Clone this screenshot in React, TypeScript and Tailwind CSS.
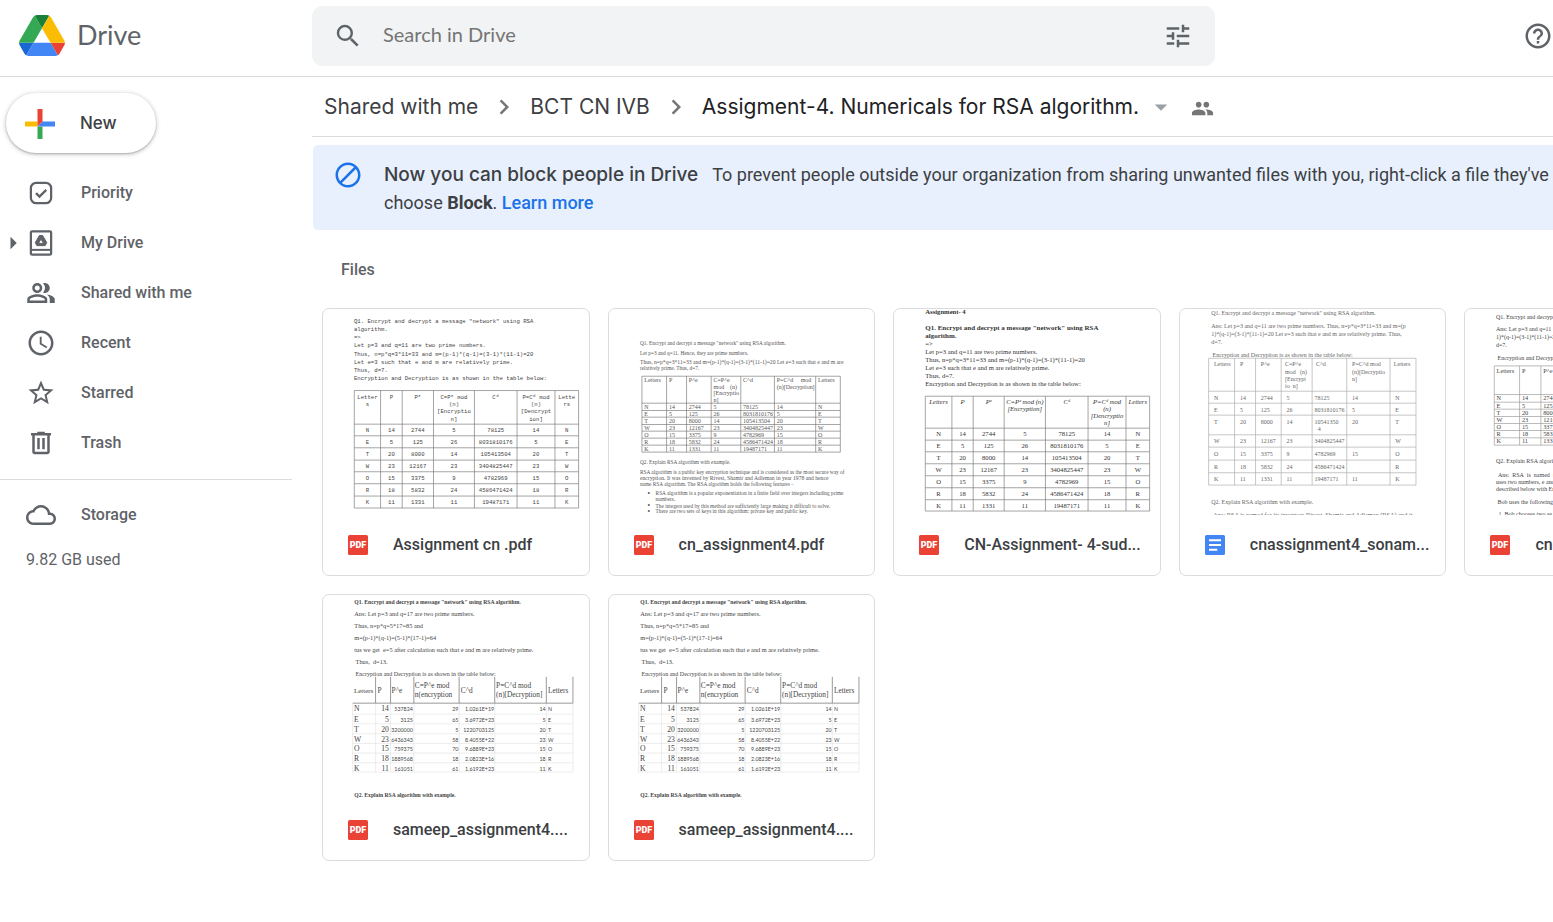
import type { ReactNode } from "react";
import {
  MdAccessTime,
  MdArrowDropDown,
  MdArrowRight,
  MdBlock,
  MdChevronRight,
  MdCloudQueue,
  MdHelpOutline,
  MdOutlinePeopleAlt,
  MdPeople,
  MdSearch,
  MdStarBorder,
  MdTune,
} from "react-icons/md";

/* ---------- Icons ---------- */

function DriveLogo() {
  return (
    <svg viewBox="0 0 87.3 78" className="h-[41px] w-[46px] shrink-0" aria-hidden="true">
      <path fill="#1967d2" d="m6.6 66.85 3.85 6.65c.8 1.4 1.95 2.5 3.3 3.3l13.75-23.8h-27.5c0 1.55.4 3.1 1.2 4.5z" />
      <path fill="#34a853" d="m43.65 25-13.75-23.8c-1.35.8-2.5 1.9-3.3 3.3l-25.4 44a9.06 9.06 0 0 0 -1.2 4.5h27.5z" />
      <path fill="#ea4335" d="m73.55 76.8c1.35-.8 2.5-1.9 3.3-3.3l1.6-2.75 7.65-13.25c.8-1.4 1.2-2.95 1.2-4.5h-27.502z" />
      <path fill="#188038" d="m43.65 25 13.75-23.8c-1.35-.8-2.9-1.2-4.5-1.2h-18.5c-1.6 0-3.15.45-4.5 1.2z" />
      <path fill="#4285f4" d="m59.8 53h-32.3l-13.75 23.8c1.35.8 2.9 1.2 4.5 1.2h50.8c1.6 0 3.15-.45 4.5-1.2z" />
      <path fill="#fbbc04" d="m73.4 26.5-12.7-22c-.8-1.4-1.95-2.5-3.3-3.3l-13.75 23.8 16.15 28h27.45c0-1.55-.4-3.1-1.2-4.5z" />
    </svg>
  );
}

function PlusIcon() {
  return (
    <svg viewBox="0 0 30 30" className="size-[30px] shrink-0" aria-hidden="true">
      <path fill="#34a853" d="M12.5 17.5h5V30h-5z" />
      <path fill="#4285f4" d="M30 12.5H17.5l-5 5H30z" />
      <path fill="#fbbc04" d="M0 12.5h12.5v5H0z" />
      <path fill="#ea4335" d="M12.5 0h5v12.5l-5 5z" />
    </svg>
  );
}

function PriorityIcon() {
  return (
    <svg viewBox="0 0 24 24" className="size-[30px]" fill="none" stroke="currentColor" strokeWidth="1.8" aria-hidden="true">
      <rect x="3.9" y="3.9" width="16.2" height="16.2" rx="4.2" />
      <path d="m8 12.1 2.8 2.8 5.4-5.4" strokeWidth="1.9" />
    </svg>
  );
}

function MyDriveIcon() {
  return (
    <svg viewBox="0 0 24 24" className="size-[30px]" fill="none" stroke="currentColor" strokeWidth="1.8" aria-hidden="true">
      <rect x="3.9" y="2.7" width="16.2" height="18.6" rx="1" />
      <path d="M3.9 17.5h16.2" strokeWidth="1.6" />
      <path
        fill="currentColor"
        stroke="currentColor"
        strokeWidth="0.8"
        strokeLinejoin="round"
        fillRule="evenodd"
        d="M10.7 6h2.6l3.3 5.7-1.3 2.4H8.7l-1.3-2.4zM12 8.8l-2 3.5h4z"
      />
    </svg>
  );
}

function TrashIcon() {
  return (
    <svg viewBox="0 0 24 24" className="size-[30px]" fill="currentColor" aria-hidden="true">
      <path d="M15 4V3H9v1H4v2h1v13c0 1.1.9 2 2 2h10c1.1 0 2-.9 2-2V6h1V4h-5zm2 15H7V6h10v13z" />
      <path d="M9 8h2v9H9zM13 8h2v9h-2z" />
    </svg>
  );
}

function PdfIcon() {
  return (
    <svg viewBox="0 0 20 20" className="size-5 shrink-0" aria-hidden="true">
      <rect width="20" height="20" rx="1.6" fill="#ea4335" />
      <text x="10" y="13.4" textAnchor="middle" fontSize="9" fontWeight="900" fill="#fff" fontFamily="Roboto, sans-serif">
        PDF
      </text>
    </svg>
  );
}

function DocsIcon() {
  return (
    <svg viewBox="0 0 20 20" className="size-5 shrink-0" aria-hidden="true">
      <rect width="20" height="20" rx="1.6" fill="#4285f4" />
      <path fill="#fff" d="M4 4.3h12v2H4zM4 9h12v2H4zM4 13.7h8.3v2H4z" />
    </svg>
  );
}

/* ---------- Document previews ---------- */

type Line = { x: number; y: number; t: string; s?: number; b?: boolean };
type Grid = {
  cols: number[];
  rows: number[];
  head: { y: number; step: number; s: number; italic?: boolean; cells: string[][] };
  body: string[][];
  s: number;
  drop: number;
  align: "start" | "middle";
  stroke?: string;
};

const LETTERS = "NETWORK".split("");
const RSA = [
  ["14", "2744", "5", "78125", "14"],
  ["5", "125", "26", "8031810176", "5"],
  ["20", "8000", "14", "105413504", "20"],
  ["23", "12167", "23", "3404825447", "23"],
  ["15", "3375", "9", "4782969", "15"],
  ["18", "5832", "24", "4586471424", "18"],
  ["11", "1331", "11", "19487171", "11"],
].map((r, i) => [LETTERS[i], ...r, LETTERS[i]]);

function Page({ label, left, font, fill, size, lines, children }: {
  label: string;
  left: number;
  font: string;
  fill: string;
  size: number;
  lines: Line[];
  children?: ReactNode;
}) {
  return (
    <svg
      viewBox={`${left} 27 798 618`}
      preserveAspectRatio="xMinYMin slice"
      className="block aspect-[266/206] w-full"
      role="img"
      aria-label={label}
      fontFamily={font}
      fill={fill}
    >
      {lines.map((l, i) => (
        <text key={i} x={l.x} y={l.y} fontSize={l.s ?? size} fontWeight={l.b ? 700 : 400}>
          {l.t}
        </text>
      ))}
      {children}
    </svg>
  );
}

function GridTable({ g }: { g: Grid }) {
  const { cols, rows, head, body } = g;
  const right = cols[cols.length - 1];
  const bottom = rows[rows.length - 1];
  const place = (c: number) => (g.align === "middle" ? (cols[c] + cols[c + 1]) / 2 : cols[c] + 7);
  return (
    <g>
      <g stroke={g.stroke ?? "#777"} strokeWidth="2">
        {cols.map((x) => (
          <line key={x} x1={x} x2={x} y1={rows[0]} y2={bottom} />
        ))}
        {rows.map((y) => (
          <line key={y} x1={cols[0]} x2={right} y1={y} y2={y} />
        ))}
      </g>
      <g textAnchor={g.align}>
        {head.cells.map((cell, c) =>
          cell.map((t, i) => (
            <text
              key={`${c}-${i}`}
              x={place(c)}
              y={head.y + i * head.step}
              fontSize={head.s}
              fontStyle={head.italic ? "italic" : "normal"}
            >
              {t}
            </text>
          )),
        )}
        {body.map((row, r) =>
          row.map((t, c) => (
            <text key={`${r}-${c}`} x={place(c)} y={rows[r + 1] + g.drop} fontSize={g.s}>
              {t}
            </text>
          )),
        )}
      </g>
    </g>
  );
}

const SERIF = '"Liberation Serif", serif';
const MONO = '"Liberation Mono", monospace';

function PreviewMono() {
  return (
    <Page
      label="Assignment cn .pdf preview"
      left={24}
      font={MONO}
      fill="#444"
      size={17}
      lines={[
        { x: 117, y: 68, t: 'Q1. Encrypt and decrypt a message "network" using RSA' },
        { x: 117, y: 93, t: "algorithm." },
        { x: 117, y: 117, t: "=>" },
        { x: 117, y: 142, t: "Let p=3 and q=11 are two prime numbers." },
        { x: 117, y: 167, t: "Thus, n=p*q=3*11=33 and m=(p-1)*(q-1)=(3-1)*(11-1)=20" },
        { x: 117, y: 191, t: "Let e=3 such that e and m are relatively prime." },
        { x: 117, y: 216, t: "Thus, d=7." },
        { x: 117, y: 240, t: "Encryption and Decryption is as shown in the table below:" },
      ]}
    >
      <GridTable
        g={{
          cols: [118, 197, 262, 356, 479, 607, 721, 792],
          rows: [272, 373, 408, 444, 481, 516, 552, 589, 625],
          head: {
            y: 297,
            step: 22,
            s: 17,
            cells: [["Letter", "s"], ["P"], ["Pᵉ"], ["C=Pᵉ mod", "(n)", "[Encryptio", "n]"], ["Cᵈ"], ["P=Cᵈ mod", "(n)", "[Dencrypt", "ion]"], ["Lette", "rs"]],
          },
          body: RSA,
          s: 17,
          drop: 24,
          align: "middle",
        }}
      />
    </Page>
  );
}

function PreviewRivest() {
  return (
    <Page
      label="cn_assignment4.pdf preview"
      left={27}
      font={SERIF}
      fill="#555"
      size={16}
      lines={[
        { x: 120, y: 136, t: 'Q1. Encrypt and decrypt a message "network" using RSA algorithm.' },
        { x: 120, y: 164, t: "Let p=3 and q=11. Hence, they are prime numbers." },
        { x: 120, y: 193, t: "Thus, n=p*q=3*11=33 and m=(p-1)*(q-1)=(3-1)*(11-1)=20 Let e=3 such that e and m are", s: 17 },
        { x: 120, y: 211, t: "relatively prime. Thus, d=7." },
        { x: 120, y: 494, t: "Q2. Explain RSA algorithm with example." },
        { x: 120, y: 522, t: "RSA algorithm is a public key encryption technique and is considered as the most secure way of" },
        { x: 120, y: 540, t: "encryption. It was invented by Rivest, Shamir and Adleman in year 1978 and hence", s: 17 },
        { x: 120, y: 558, t: "name RSA algorithm. The RSA algorithm holds the following features −" },
        { x: 143, y: 588, t: "•", s: 22 },
        { x: 167, y: 587, t: "RSA algorithm is a popular exponentiation in a finite field over integers including prime" },
        { x: 167, y: 605, t: "numbers." },
        { x: 143, y: 625, t: "•", s: 22 },
        { x: 167, y: 624, t: "The integers used by this method are sufficiently large making it difficult to solve." },
        { x: 143, y: 642, t: "•", s: 22 },
        { x: 167, y: 641, t: "There are two sets of keys in this algorithm: private key and public key." },
      ]}
    >
      <GridTable
        g={{
          cols: [126, 200, 260, 334, 423, 524, 648, 722],
          rows: [229, 310, 332, 352, 374, 394, 415, 436, 457],
          head: {
            y: 246,
            step: 20,
            s: 18,
            cells: [["Letters"], ["P"], ["P^e"], ["C=P^e", "mod\u00a0\u00a0\u00a0 (n)", "[Encryptio", "n]"], ["C^d"], ["P=C^d\u00a0\u00a0\u00a0\u00a0 mod", "(n)[Decryption]"], ["Letters"]],
          },
          body: RSA,
          s: 18,
          drop: 17,
          align: "start",
        }}
      />
    </Page>
  );
}

function PreviewSud() {
  return (
    <Page
      label="CN-Assignment-4 preview"
      left={24}
      font={SERIF}
      fill="#333"
      size={20}
      lines={[
        { x: 118, y: 43, t: "Assignment- 4", b: true },
        { x: 118, y: 91, t: 'Q1. Encrypt and decrypt a message "network" using RSA', b: true, s: 21 },
        { x: 118, y: 114, t: "algorithm.", b: true, s: 21 },
        { x: 118, y: 138, t: "=>" },
        { x: 118, y: 163, t: "Let p=3 and q=11 are two prime numbers." },
        { x: 118, y: 187, t: "Thus, n=p*q=3*11=33 and m=(p-1)*(q-1)=(3-1)*(11-1)=20" },
        { x: 118, y: 210, t: "Let e=3 such that e and m are relatively prime." },
        { x: 118, y: 234, t: "Thus, d=7." },
        { x: 118, y: 258, t: "Encryption and Decryption is as shown in the table below:" },
      ]}
    >
      <GridTable
        g={{
          cols: [118, 198, 262, 355, 479, 607, 721, 792],
          rows: [289, 385, 421, 456, 492, 528, 564, 600, 634],
          head: {
            y: 313,
            step: 21,
            s: 20,
            italic: true,
            cells: [["Letters"], ["P"], ["Pᵉ"], ["C=Pᵉ mod (n)", "[Encryption]"], ["Cᵈ"], ["P=Cᵈ mod", "(n)", "[Dencryptio", "n]"], ["Letters"]],
          },
          body: RSA,
          s: 20,
          drop: 25,
          align: "middle",
        }}
      />
    </Page>
  );
}

function PreviewSonam() {
  const body = RSA.map((r) => [...r]);
  body[2][4] = "10541350";
  body[3][5] = "";
  body[5][5] = "";
  return (
    <Page
      label="cnassignment4_sonam preview"
      left={30}
      font={SERIF}
      fill="#666"
      size={18}
      lines={[
        { x: 124, y: 45, t: 'Q1. Encrypt and decrypt a message "network" using RSA algorithm.' },
        { x: 124, y: 83, t: "Ans: Let p=3 and q=11 are two prime numbers. Thus, n=p*q=3*11=33 and m=(p" },
        { x: 124, y: 107, t: "1)*(q-1)=(3-1)*(11-1)=20 Let e=3 such that e and m are relatively prime. Thus," },
        { x: 124, y: 131, t: "d=7." },
        { x: 128, y: 170, t: "Encryption and Decryption is as shown in the table below:" },
        { x: 444, y: 394, t: "4" },
        { x: 124, y: 614, t: "Q2. Explain RSA algorithm with example." },
        { x: 130, y: 651, t: "Ans: RSA is named for its inventors Rivest, Shamir and Adleman (RSA) and it", s: 19 },
      ]}
    >
      <GridTable
        g={{
          cols: [116, 194, 257, 334, 427, 531, 661, 739],
          rows: [175, 274, 310, 346, 405, 442, 481, 519, 556],
          head: {
            y: 199,
            step: 22,
            s: 18,
            cells: [["\u00a0\u00a0Letters"], ["\u00a0\u00a0P"], ["\u00a0\u00a0P^e"], ["\u00a0C=P^e", "\u00a0mod\u00a0\u00a0 (n)", "\u00a0[Encrypt", "\u00a0io\u00a0 n]"], ["\u00a0C^d"], ["\u00a0\u00a0P=C^d mod", "\u00a0\u00a0(n)[Decryptio", "\u00a0\u00a0n]"], ["\u00a0Letters"]],
          },
          body: body.map((r) => r.map((t, c) => (c === 4 ? t : `\u00a0\u00a0${t}`))),
          s: 18,
          drop: 26,
          align: "start",
          stroke: "#aaa",
        }}
      />
    </Page>
  );
}

function PreviewBob() {
  return (
    <Page
      label="cn assignment preview"
      left={75}
      font={SERIF}
      fill="#444"
      size={18}
      lines={[
        { x: 168, y: 57, t: "Q1. Encrypt and decrypt" },
        { x: 168, y: 94, t: "Ans: Let p=3 and q=11" },
        { x: 168, y: 118, t: "1)*(q-1)=(3-1)*(11-1)=20" },
        { x: 168, y: 141, t: "d=7." },
        { x: 173, y: 180, t: "Encryption and Decryption" },
        { x: 168, y: 491, t: "Q2. Explain RSA algorithm" },
        { x: 174, y: 533, t: "Ans:\u00a0 RSA\u00a0 is\u00a0 named\u00a0 for" },
        { x: 168, y: 554, t: "uses two numbers, e and" },
        { x: 168, y: 575, t: "described below with Enc" },
        { x: 173, y: 613, t: "Bob uses the following" },
        { x: 176, y: 650, t: "1. Bob chooses two se" },
      ]}
    >
      <GridTable
        g={{
          cols: [163, 239, 303, 380],
          rows: [198, 284, 307, 328, 350, 371, 392, 414, 436],
          head: { y: 218, step: 21, s: 19, cells: [["Letters"], ["P"], ["P^e"]] },
          body: RSA.map((r) => r.slice(0, 3)),
          s: 19,
          drop: 17,
          align: "start",
          stroke: "#999",
        }}
      />
    </Page>
  );
}

const SAMEEP = [
  ["14", "537824", "29", "1.0261E+19", "14"],
  ["5", "3125", "65", "3.6972E+23", "5"],
  ["20", "3200000", "5", "1220703125", "20"],
  ["23", "6436343", "58", "8.4055E+22", "23"],
  ["15", "759375", "70", "9.6889E+23", "15"],
  ["18", "1889568", "18", "2.0823E+16", "18"],
  ["11", "161051", "61", "1.6192E+23", "11"],
];

function PreviewSameep() {
  const cols = [113, 182, 227, 297, 433, 540, 695, 775];
  const rows = [352, 385, 414, 444, 473, 502, 531, 559];
  const ends = [222, 294, 431, 538, 693];
  const sheet = { fontFamily: 'Lato, "Noto Sans", sans-serif', fontSize: 16 };
  return (
    <Page
      label="sameep_assignment4 preview"
      left={24}
      font={SERIF}
      fill="#444"
      size={19}
      lines={[
        { x: 118, y: 54, t: 'Q1. Encrypt and decrypt a message "network" using RSA algorithm.', b: true, s: 17 },
        { x: 118, y: 90, t: "Ans: Let p=3 and q=17 are two prime numbers." },
        { x: 118, y: 126, t: "Thus, n=p*q=5*17=85 and" },
        { x: 118, y: 162, t: "m=(p-1)*(q-1)=(5-1)*(17-1)=64" },
        { x: 118, y: 198, t: "tus we get\u00a0 e=5 after calculation such that e and m are relatively prime." },
        { x: 122, y: 235, t: "Thus,\u00a0 d=13." },
        { x: 122, y: 270, t: "Encryption and Decryption is as shown in the table below:", s: 18 },
        { x: 117, y: 320, t: "Letters", s: 21 },
        { x: 188, y: 320, t: "P", s: 22 },
        { x: 230, y: 320, t: "P^e", s: 22 },
        { x: 300, y: 305, t: "C=P^e mod", s: 22 },
        { x: 300, y: 335, t: "n(encryption", s: 22 },
        { x: 438, y: 320, t: "C^d", s: 22 },
        { x: 544, y: 305, t: "P=C^d mod", s: 22 },
        { x: 544, y: 335, t: "(n)[Decryption]", s: 22 },
        { x: 700, y: 320, t: "Letters", s: 22 },
        { x: 118, y: 633, t: "Q2. Explain RSA algorithm with example.", b: true, s: 17 },
      ]}
    >
      <g stroke="#666" strokeWidth="2">
        {cols.slice(1).map((x) => (
          <line key={x} x1={x} x2={x} y1="273" y2="352" />
        ))}
        <line x1="113" x2="775" y1="352" y2="352" />
      </g>
      <g stroke="#e4e4e4" strokeWidth="2">
        {rows.slice(1).map((y) => (
          <line key={y} x1="113" x2="775" y1={y} y2={y} />
        ))}
        {cols.map((x) => (
          <line key={x} x1={x} x2={x} y1="354" y2="559" />
        ))}
      </g>
      {SAMEEP.map((row, r) => {
        const y = rows[r] + 24;
        return (
          <g key={r}>
            <text x="117" y={y} fontSize="23">
              {LETTERS[r]}
            </text>
            <text x={ends[0]} y={y} fontSize="23" textAnchor="end">
              {row[0]}
            </text>
            {row.slice(1).map((t, c) => (
              <text key={c} x={ends[c + 1]} y={y} textAnchor="end" {...sheet}>
                {t}
              </text>
            ))}
            <text x="700" y={y} {...sheet}>
              {LETTERS[r]}
            </text>
          </g>
        );
      })}
    </Page>
  );
}

/* ---------- Page parts ---------- */

const files: { name: string; icon: ReactNode; preview: ReactNode }[] = [
  { name: "Assignment cn .pdf", icon: <PdfIcon />, preview: <PreviewMono /> },
  { name: "cn_assignment4.pdf", icon: <PdfIcon />, preview: <PreviewRivest /> },
  { name: "CN-Assignment- 4-sud...", icon: <PdfIcon />, preview: <PreviewSud /> },
  { name: "cnassignment4_sonam...", icon: <DocsIcon />, preview: <PreviewSonam /> },
  { name: "cn", icon: <PdfIcon />, preview: <PreviewBob /> },
  { name: "sameep_assignment4....", icon: <PdfIcon />, preview: <PreviewSameep /> },
  { name: "sameep_assignment4....", icon: <PdfIcon />, preview: <PreviewSameep /> },
];

function NavItem({ icon, label, expandable }: { icon: ReactNode; label: string; expandable?: boolean }) {
  return (
    <li>
      <a href="#" className="flex h-[50px] items-center text-[#5f6368]">
        <span className="flex w-[26px] justify-center">
          {expandable && <MdArrowRight className="size-[30px] shrink-0" aria-hidden="true" />}
        </span>
        <span className="mr-[25px] shrink-0 text-[30px]">{icon}</span>
        <span className="text-base font-medium">{label}</span>
      </a>
    </li>
  );
}

function Header() {
  return (
    <header className="flex h-[77px] shrink-0 border-b border-[#dadce0] pb-1">
      <a
        href="#"
        className="flex w-[312px] shrink-0 items-center gap-3 pb-[2px] pl-[19px] font-[Lato,sans-serif] text-[27px] text-[#5f6368]"
      >
        <DriveLogo />
        Drive
      </a>
      <div className="flex flex-1 items-center">
        <form className="flex h-[60px] max-w-[903px] flex-1 items-center rounded-[10px] bg-[#f1f3f4] pr-[22px] pl-[21px] text-[#5f6368]">
          <button type="button" aria-label="Search">
            <MdSearch className="size-[30px]" />
          </button>
          <input
            type="text"
            aria-label="Search in Drive"
            placeholder="Search in Drive"
            className="ml-5 min-w-0 flex-1 bg-transparent pb-1 font-[Lato,sans-serif] text-xl outline-none placeholder:text-[#757575]"
          />
          <button type="button" aria-label="Search options">
            <MdTune className="size-[30px]" />
          </button>
        </form>
        <button type="button" aria-label="Support" className="ml-auto text-[#5f6368]">
          <MdHelpOutline className="size-[30px]" />
        </button>
      </div>
    </header>
  );
}

function Sidebar() {
  return (
    <aside className="w-[312px] shrink-0 pt-4">
      <button
        type="button"
        className="ml-[6px] flex h-[60px] w-[150px] items-center gap-[25px] rounded-full bg-white pt-px pl-[19px] font-[Inter,sans-serif] text-[17px] font-medium text-[#3c4043] shadow-[0_1px_2px_rgba(60,64,67,0.3),0_1px_4px_1px_rgba(60,64,67,0.2)]"
      >
        <PlusIcon />
        New
      </button>
      <nav className="mr-5 border-b border-[#dadce0] pt-[15px] pb-[11px]" aria-label="Drive">
        <ul>
          <NavItem icon={<PriorityIcon />} label="Priority" />
          <NavItem icon={<MyDriveIcon />} label="My Drive" expandable />
          <NavItem icon={<MdOutlinePeopleAlt />} label="Shared with me" />
          <NavItem icon={<MdAccessTime />} label="Recent" />
          <NavItem icon={<MdStarBorder />} label="Starred" />
          <NavItem icon={<TrashIcon />} label="Trash" />
        </ul>
      </nav>
      <ul className="pt-[10px]">
        <NavItem icon={<MdCloudQueue />} label="Storage" />
      </ul>
      <p className="pt-2 pl-[26px] text-base text-[#5f6368]">9.82 GB used</p>
    </aside>
  );
}

function Breadcrumb() {
  return (
    <nav
      aria-label="Breadcrumb"
      className="flex h-[60px] items-center border-b border-[#dadce0] pl-3 font-[Inter,sans-serif] text-[21px] whitespace-nowrap text-[#3c4043]"
    >
      <a href="#">Shared with me</a>
      <MdChevronRight className="mx-[11px] size-[30px] text-[#757575]" aria-hidden="true" />
      <a href="#">BCT CN IVB</a>
      <MdChevronRight className="mx-[11px] size-[30px] text-[#757575]" aria-hidden="true" />
      <button type="button" className="flex items-center gap-[7px] text-[#202124]">
        Assigment-4. Numericals for RSA algorithm.
        <MdArrowDropDown className="size-[30px] text-[#9aa0a6]" aria-hidden="true" />
      </button>
      <button type="button" aria-label="Manage people" className="ml-[15px] pt-1 text-[#757575]">
        <MdPeople className="size-[23px]" />
      </button>
    </nav>
  );
}

function Banner() {
  return (
    <section className="mt-2 ml-px flex min-w-[1420px] items-start rounded-[5px] bg-[#e8f0fe] pt-[15px] pb-[13px] pl-5 text-[#3c4043]">
      <MdBlock className="size-[30px] shrink-0 text-[#1a73e8]" aria-hidden="true" />
      <p className="ml-[21px] pt-px text-lg leading-7">
        <span className="mr-[14px] font-[Inter,sans-serif] text-[19px] leading-none font-medium">
          Now you can block people in Drive
        </span>
        To prevent people outside your organization from sharing unwanted files with you, right-click a file they've
        <br />
        choose <b className="font-bold">Block</b>.{" "}
        <a href="#" className="font-medium text-[#1a73e8]">
          Learn more
        </a>
      </p>
    </section>
  );
}

export default function App() {
  return (
    <div className="flex min-h-screen flex-col overflow-hidden bg-white font-[Roboto,sans-serif]">
      <Header />
      <div className="flex flex-1">
        <Sidebar />
        <main className="min-w-0 flex-1 overflow-hidden">
          <Breadcrumb />
          <Banner />
          <h2 className="mt-7 ml-[29px] text-base font-medium text-[#5f6368]">Files</h2>
          <ul className="mt-[26px] ml-[10px] grid min-w-[1410px] grid-cols-5 gap-[18px]">
            {files.map((f, i) => (
              <li key={i} className="flex aspect-square flex-col overflow-hidden rounded-[7px] border border-[#dadce0] bg-white">
                {f.preview}
                <div className="flex flex-1 items-center gap-[25px] px-[25px]">
                  {f.icon}
                  <span className="text-base font-medium whitespace-nowrap text-[#3c4043]">{f.name}</span>
                </div>
              </li>
            ))}
          </ul>
        </main>
      </div>
    </div>
  );
}
